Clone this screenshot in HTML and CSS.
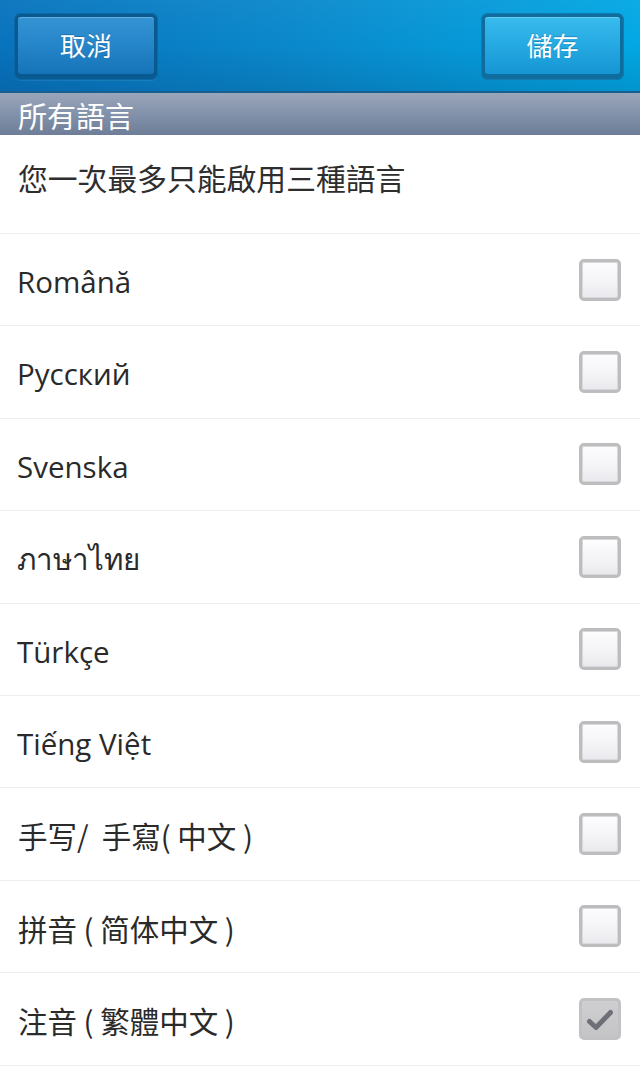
FILE: index.html
```html
<!DOCTYPE html>
<html lang="zh-Hant">
<head>
<meta charset="utf-8">
<title>語言</title>
<link rel="stylesheet" href="styles.css">
</head>
<body>
<div class="screen">
  <header class="titlebar">
    <div class="btn-frame"><button class="btn btn-cancel">取消</button></div>
    <div class="btn-frame btn-frame-save"><button class="btn btn-save">儲存</button></div>
  </header>
  <div class="section-head">所有語言</div>
  <div class="info">您一次最多只能啟用三種語言</div>
  <ul class="list">
    <li class="row"><span class="label">Română</span><span class="check"></span></li>
    <li class="row"><span class="label">Русский</span><span class="check"></span></li>
    <li class="row"><span class="label">Svenska</span><span class="check"></span></li>
    <li class="row"><span class="label thai">ภาษาไทย</span><span class="check"></span></li>
    <li class="row"><span class="label">Türkçe</span><span class="check"></span></li>
    <li class="row"><span class="label">Tiếng Việt</span><span class="check"></span></li>
    <li class="row"><span class="label cjk">手写/&nbsp; 手寫( 中文 )</span><span class="check"></span></li>
    <li class="row"><span class="label cjk">拼音 ( 简体中文 )</span><span class="check"></span></li>
    <li class="row"><span class="label cjk">注音 ( 繁體中文 )</span><span class="check checked"><svg viewBox="0 0 42 42" width="42" height="42"><path d="M10.5 23.5 L17 29.5 L31.5 14.5" fill="none" stroke="#6e7078" stroke-width="5" stroke-linecap="round" stroke-linejoin="round"/></svg></span></li>
  </ul>
</div>
</body>
</html>
```
FILE: styles.css
```css
* { box-sizing: border-box; }
html, body { margin: 0; padding: 0; background: #fff; }
body {
  width: 640px;
  height: 1067px;
  overflow: hidden;
  font-family: "Open Sans", "Noto Sans CJK TC", sans-serif;
  color: #2b2b2b;
}
.screen { width: 640px; }

.titlebar {
  height: 93px;
  display: flex;
  justify-content: space-between;
  align-items: flex-start;
  padding: 13px 16px 0 14px;
  background:
    linear-gradient(180deg, rgba(255,255,255,0.04) 0%, rgba(0,0,0,0) 50%, rgba(0,30,70,0.14) 100%),
    linear-gradient(90deg, #0873bd 0%, #0a88cb 45%, #02a8e4 100%);
  border-bottom: 2px solid #165f8e;
}
.btn-frame {
  width: 144px;
  height: 67px;
  padding: 4px;
  border-radius: 7px;
  background: #0a5a92;
  box-shadow: inset 0 0 0 1px #0b6aa6, 0 1px 0 rgba(255,255,255,0.08);
}
.btn-frame-save {
  width: 143px;
  background: #0f6c9e;
  box-shadow: inset 0 0 0 1px #127ab0;
}
.btn {
  display: flex;
  align-items: center;
  justify-content: center;
  width: 100%;
  height: 57px;
  margin: 0;
  padding: 0 0 2px 0;
  border: 0;
  border-radius: 3px;
  font-family: "Noto Sans CJK TC", sans-serif;
  font-size: 26px;
  color: #fff;
  text-shadow: 0 -1px 0 rgba(0,0,0,0.2);
}
.btn-cancel {
  background: linear-gradient(180deg, #3594d3 0%, #2585c9 50%, #1673b8 100%);
  box-shadow: inset 0 1px 0 rgba(255,255,255,0.25);
}
.btn-save {
  background: linear-gradient(180deg, #38bbec 0%, #25a9e2 50%, #1596d4 100%);
  box-shadow: inset 0 1px 0 rgba(255,255,255,0.25);
}

.section-head {
  height: 42px;
  padding: 2px 0 0 18px;
  display: flex;
  align-items: center;
  background: linear-gradient(180deg, #9aa6ba 0%, #8090a8 55%, #6e7e98 100%);
  font-family: "Noto Sans CJK TC", sans-serif;
  font-size: 29px;
  line-height: 1;
  color: #fff;
}

.info {
  height: 99px;
  display: flex;
  align-items: center;
  padding: 0 18px 14px;
  font-family: "Noto Sans CJK TC", sans-serif;
  font-size: 29.8px;
  color: #2e2e2e;
  border-bottom: 1px solid #efefef;
}

.list { list-style: none; margin: 0; padding: 0; }
.row {
  height: 92.4px;
  display: flex;
  align-items: center;
  justify-content: space-between;
  padding: 0 19px 0 17px;
  border-bottom: 1px solid #efefef;
}
.label {
  font-size: 29.5px;
  line-height: 1;
  color: #2a2a2a;
  padding-top: 4px;
}
.label.cjk {
  font-family: "Noto Sans CJK SC", "Noto Sans CJK TC", sans-serif;
  font-size: 29.5px;
  padding-left: 1px;
}
.label.thai { font-size: 29.5px; }

.check {
  width: 42px;
  height: 42px;
  border-radius: 5px;
  border: 3px solid #bdbdbf;
  background: linear-gradient(180deg, #fdfdfe 0%, #f3f2f5 60%, #e9e8ec 100%);
  box-shadow: inset 0 0 0 1px #d8d8da;
  flex: none;
  position: relative;
}
.check.checked {
  border-color: #c2c2c4;
  background: linear-gradient(180deg, #cfcfd2 0%, #c4c4c7 100%);
  box-shadow: none;
}
.check svg {
  position: absolute;
  left: -3px;
  top: -3px;
}
```
